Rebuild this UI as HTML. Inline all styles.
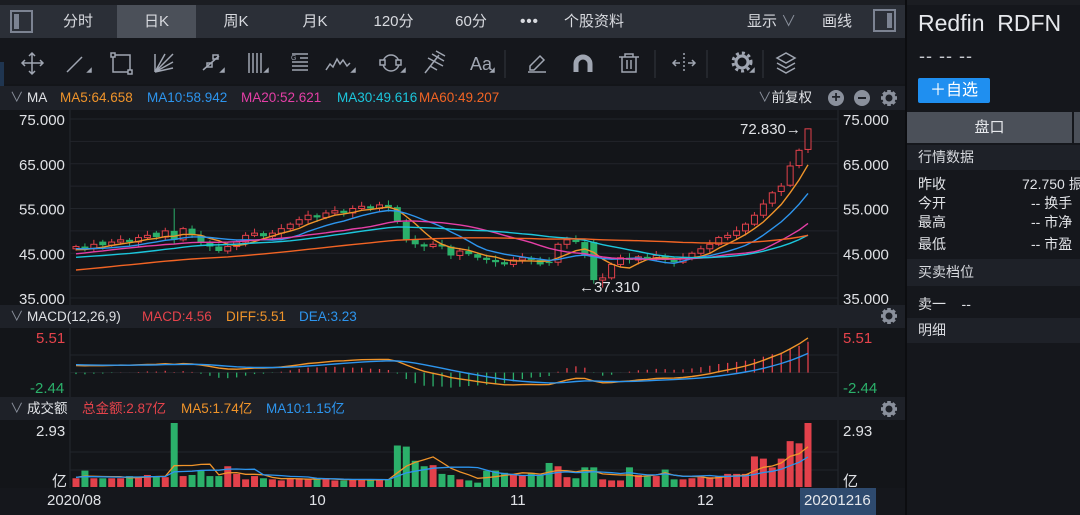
<!DOCTYPE html>
<html><head><meta charset="utf-8">
<style>
*{margin:0;padding:0;box-sizing:border-box}
body{width:1080px;height:515px;overflow:hidden;background:#131519;font-family:"Liberation Sans","Noto Sans CJK SC",sans-serif;color:#d8dadf;position:relative}
.a{position:absolute;white-space:nowrap}
.tab{position:absolute;top:5px;height:33px;background:#2b2f37;color:#d8dadf;font-size:15px;line-height:33px;text-align:center}
.hdr{position:absolute;left:0;width:905px;background:#1e2128;font-size:13.5px;line-height:23px}
.row{position:absolute;left:918px;font-size:14px;color:#e0e2e6;white-space:nowrap}
</style></head><body>
<div class="a" style="left:0;top:0;width:1080px;height:5px;background:#1b1d22"></div>
<div class="a" style="left:0;top:5px;width:905px;height:33px;background:#2b2f37"></div>
<div class="tab" style="left:0;width:38px;background:#2b2f37"><div class="a" style="left:10px;top:5px;width:23px;height:23px;border:2px solid #7c8392"><div class="a" style="left:2px;top:2px;width:5px;height:15px;background:#7c8392"></div></div></div>
<div class="tab" style="left:40px;width:76px">分时</div>
<div class="tab" style="left:117px;width:79px;background:#4b5059">日K</div>
<div class="tab" style="left:197px;width:78px">周K</div>
<div class="tab" style="left:276px;width:78px">月K</div>
<div class="tab" style="left:355px;width:77px">120分</div>
<div class="tab" style="left:433px;width:76px">60分</div>
<div class="tab" style="left:510px;width:39px;font-weight:bold;letter-spacing:1px">•••</div>
<div class="tab" style="left:550px;width:88px">个股资料</div>
<div class="tab" style="left:639px;width:266px;text-align:left"><span style="position:absolute;left:108px">显示 <span style="color:#8a909c">∨</span></span><span style="position:absolute;left:183px">画线</span><div class="a" style="left:234px;top:4px;width:23px;height:23px;border:2px solid #7c8392"><div class="a" style="right:2px;top:2px;width:5px;height:15px;background:#7c8392"></div></div></div>
<div class="a" style="left:0;top:38px;width:905px;height:46px;background:#15171c"></div>
<div class="a" style="left:0;top:62px;width:4px;height:320px;background:#1f3550"></div>
<svg class="a" style="left:0;top:38px" width="905" height="46" stroke="#a0a6b2" fill="none" stroke-width="1.5">
<path d="M22 25h21M32 15v21M29 18l3-3 3 3M29 33l3 3 3-3M25 22l-3 3 3 3M40 22l3 3-3 3"/>
<path d="M67 34l15-15"/><path d="M88 34l3-3v3z" fill="#a0a6b2"/>
<rect x="113" y="17" width="17" height="17"/><rect x="111" y="15" width="4" height="4" fill="#15171c"/><rect x="128" y="32" width="4" height="4" fill="#15171c"/>
<path d="M155 34V16M155 34l18-18M155 34l18-10M155 34l18-4M155 34l10-18M155 34l15-15"/>
<path d="M203 32l16-14"/><rect x="207" y="25" width="5" height="4"/><rect x="213" y="17" width="5" height="4"/><path d="M221 34l3-3v3z" fill="#a0a6b2"/>
<path d="M249 15v20M253 15v20M257 15v20M261 15v20"/><path d="M265 34l3-3v3z" fill="#a0a6b2"/>
<path d="M292 16h16M300 20h8M292 24h16M292 28h16M292 32h16"/><text x="291" y="22" font-size="7" fill="#a0a6b2" stroke="none">G</text>
<path d="M326 32l4-6 3 3 4-8 3 5 3-4 4 6 3-3"/><path d="M352 34l3-3v3z" fill="#a0a6b2"/>
<circle cx="391" cy="25" r="8"/><rect x="380" y="22" width="5" height="5" fill="#15171c"/><rect x="396" y="22" width="5" height="5" fill="#15171c"/><path d="M402 34l3-3v3z" fill="#a0a6b2"/>
<path d="M425 35l14-18M428 20l15 8M432 16l12 7M436 13l9 5M430 28l7 4"/>
<text x="470" y="32" font-size="18" fill="#a0a6b2" stroke="none" font-family="Liberation Sans">Aa</text><path d="M491 34l3-3v3z" fill="#a0a6b2"/>
<path d="M505 12v28" stroke="#2a2d33"/>
<path d="M530 28l10-10 4 4-10 10h-4zM528 34h18"/>
<path d="M576 34v-8a7 7 0 0 1 14 0v8" stroke-width="5"/>
<path d="M619 19h20M625 19v-3h8v3M622 19v15h14V19M627 22v9M631 22v9"/>
<path d="M655 12v28M707 12v28M763 12v28" stroke="#2a2d33"/>
<path d="M684 15v20" stroke-dasharray="2 2"/><path d="M680 25h-6M688 25h6M676 22l-3 3 3 3M692 22l3 3-3 3"/>
<circle cx="742" cy="24" r="6" stroke-width="3"/><circle cx="742" cy="24" r="9" stroke-dasharray="3 3" stroke-width="3"/><path d="M751 34l3-3v3z" fill="#a0a6b2"/>
<path d="M777 20l9-5 9 5-9 5zM777 25l9 5 9-5M777 30l9 5 9-5"/>
</svg>
<div class="hdr" style="top:86px;height:24px"><span class="a" style="left:10px;color:#8a909c">∨</span><span class="a" style="left:27px;color:#e0e2e6">MA</span>
<span class="a" style="left:60px;color:#f0942a">MA5:64.658</span><span class="a" style="left:147px;color:#2d95ee">MA10:58.942</span><span class="a" style="left:241px;color:#e43fa6">MA20:52.621</span><span class="a" style="left:337px;color:#1cc6dc">MA30:49.616</span><span class="a" style="left:419px;color:#f26424">MA60:49.207</span>
<span class="a" style="left:758px;color:#e0e2e6"><span style="color:#8a909c">∨</span>前复权</span>
<span class="a" style="left:828px;top:4px;width:16px;height:16px;border-radius:50%;background:#8a909c;color:#1e2128;font-weight:bold;line-height:16px;text-align:center;font-size:16px">+</span>
<span class="a" style="left:854px;top:4px;width:16px;height:16px;border-radius:50%;background:#8a909c"><span class="a" style="left:4px;top:7px;width:8px;height:2px;background:#1e2128"></span></span>
</div>
<div class="hdr" style="top:305px;height:23px"><span class="a" style="left:10px;color:#8a909c">∨</span><span class="a" style="left:27px;color:#e0e2e6">MACD(12,26,9)</span><span class="a" style="left:142px;color:#e5434b">MACD:4.56</span><span class="a" style="left:226px;color:#f0942a">DIFF:5.51</span><span class="a" style="left:299px;color:#2d95ee">DEA:3.23</span></div>
<div class="hdr" style="top:397px;height:23px"><span class="a" style="left:10px;color:#8a909c">∨</span><span class="a" style="left:27px;color:#e0e2e6">成交额</span><span class="a" style="left:82px;color:#e5434b">总金额:2.87亿</span><span class="a" style="left:181px;color:#f0942a">MA5:1.74亿</span><span class="a" style="left:266px;color:#2d95ee">MA10:1.15亿</span></div>
<svg id="ch" class="a" style="left:0;top:0" width="905" height="515"></svg>
<div class="a" style="left:905px;top:0;width:2px;height:515px;background:#0c0d10"></div>
<div class="a" style="left:907px;top:5px;width:173px;height:105px;background:#15171c"></div>
<div class="a" style="left:918px;top:10px;font-size:23px;color:#e6e8ec">Redfin&nbsp; RDFN</div>
<div class="a" style="left:919px;top:46px;font-size:18px;color:#c8cad0;letter-spacing:1px">-- -- --</div>
<div class="a" style="left:918px;top:78px;width:72px;height:25px;background:#1f8ff0;border-radius:2px;color:#fff;font-size:16px;line-height:25px;text-align:center">＋自选</div>
<div class="a" style="left:907px;top:110px;width:173px;height:405px;background:#15171c"></div>
<div class="a" style="left:907px;top:112px;width:165px;height:31px;background:#4b5059;color:#e6e8ec;font-size:15px;line-height:31px;text-align:center">盘口</div>
<div class="a" style="left:1074px;top:112px;width:6px;height:31px;background:#4b5059"></div>
<div class="a" style="left:907px;top:145px;width:173px;height:25px;background:#1e2128;font-size:14px;line-height:25px;padding-left:11px">行情数据</div>
<div class="row" style="top:174px">昨收</div><div class="row" style="top:193px">今开</div><div class="row" style="top:212px">最高</div><div class="row" style="top:234px">最低</div>
<div class="row" style="left:1022px;top:174px">72.750 振幅</div><div class="row" style="left:1031px;top:193px">-- 换手</div><div class="row" style="left:1031px;top:212px">-- 市净</div><div class="row" style="left:1031px;top:234px">-- 市盈</div>
<div class="a" style="left:907px;top:259px;width:173px;height:27px;background:#1e2128;font-size:14px;line-height:27px;padding-left:11px">买卖档位</div>
<div class="row" style="top:294px">卖一 &nbsp; &nbsp;--</div>
<div class="a" style="left:907px;top:318px;width:173px;height:25px;background:#1e2128;font-size:14px;line-height:25px;padding-left:11px">明细</div>
<script>
(function(){
var S='';
function L(x1,y1,x2,y2,c,w){S+='<line x1="'+x1+'" y1="'+y1+'" x2="'+x2+'" y2="'+y2+'" stroke="'+c+'" stroke-width="'+(w||1)+'"/>';}
function R(x,y,w,h,f,s){S+='<rect x="'+x+'" y="'+y+'" width="'+w+'" height="'+Math.max(h,1)+'" fill="'+f+'"'+(s?' stroke="'+s+'"':'')+'/>';}
function T(x,y,t,c,a,sz){S+='<text x="'+x+'" y="'+y+'" fill="'+c+'" font-size="'+(sz||15)+'" text-anchor="'+(a||'start')+'" font-family="Liberation Sans,Noto Sans CJK SC,sans-serif">'+t+'</text>';}
function P(pts,c,w){S+='<polyline fill="none" stroke="'+c+'" stroke-width="'+(w||1.5)+'" points="'+pts.join(' ')+'"/>';}
R(0,110,905,195,'#131519');R(0,328,905,69,'#131519');R(0,420,905,68,'#131519');
L(70,110,70,305,'#262930');L(70,328,70,397,'#262930');L(70,420,70,488,'#262930');
L(838,110,838,305,'#262930');L(838,328,838,397,'#262930');L(838,420,838,488,'#262930');
function py(p){return 119+(75-p)*4.475;}
for(var p=35;p<=75;p+=5){L(70,py(p),838,py(p),'#22252b');}
[75,65,55,45,35].forEach(function(p){T(19,py(p)+6,p.toFixed(3),'#e0e2e6');T(843,py(p)+6,p.toFixed(3),'#e0e2e6');});
var C=[46.5,46,47,46.8,47.5,48,47.5,48.5,49,48.6,50,48,50.5,49,47.5,46.5,45.5,46.5,47.5,49,49.5,48.8,49.5,50.5,51.5,52.5,53.5,53,54,54.5,54,55,55.5,55,55.8,55.3,52,48,47,46.5,47,46.5,44.5,45.5,44.8,44,43.5,43,42.5,43.5,44,43.5,42.5,42.8,47,48,47.5,44.5,39,39.5,42.5,44,43.5,44.2,43.8,44.5,43.5,43,44,45,46,47,48.5,49,50,51.5,53.5,56,58.5,60,64.5,68,72.8];
var N=C.length,pre=[];for(var i=0;i<70;i++)pre.push(34+i*0.18+Math.sin(i/3)*1.2);
var A=pre.concat(C);
function ma(n,i){var s=0;for(var k=0;k<n;k++)s+=A[i-k];return s/n;}
function X(i){return 76+i*(732/(N-1));}
var O=[];for(var i=0;i<N;i++){var pc=i?C[i-1]:46;var o=pc;if(Math.abs(C[i]-pc)<0.4)o=pc+(i%2?0.6:-0.6);O.push(o);}
O[58]=47.5;O[54]=43;O[82]=68.2;O[81]=64.6;O[80]=60.2;O[79]=58.8;O[78]=56.2;
var hi={11:55,59:37.31};
for(var i=0;i<N;i++){var x=X(i),o=O[i],c=C[i],up=c>=o;var tp=Math.max(o,c),bt=Math.min(o,c);var hh=(hi[i]&&hi[i]>tp)?hi[i]:tp+0.4+(i%3)*0.3;var ll=i==59?37.31:bt-0.4-(i%4)*0.2;
if(i==82)hh=72.9;
var col=up?'#e2414b':'#2bb06a';L(x,py(hh),x,py(ll),col,1);
if(up)R(x-3,py(tp),6,py(bt)-py(tp),'#131519',col);else R(x-3.5,py(tp),7,py(bt)-py(tp),col);}
var mc=[[5,'#f0942a'],[10,'#2d95ee'],[20,'#e43fa6'],[30,'#1cc6dc'],[60,'#f26424']];
mc.forEach(function(m){var pts=[];for(var i=0;i<N;i++){pts.push(X(i).toFixed(1)+','+py(ma(m[0],i+70)).toFixed(1));}P(pts,m[1],1.4);});
T(740,134,'72.830→','#e0e2e6');T(579,292,'←37.310','#e0e2e6');
function ema(arr,n){var k=2/(n+1),r=[arr[0]];for(var i=1;i<arr.length;i++)r.push(arr[i]*k+r[i-1]*(1-k));return r;}
var e12=ema(A,12),e26=ema(A,26),dif=[];for(var i=0;i<A.length;i++)dif.push(e12[i]-e26[i]);var dea=ema(dif,9);
var sc=5.51/dif[A.length-1];
function my(v){return 372.6-v*sc*(50/7.95);}
L(70,355,838,355,'#22252b');L(70,372.6,838,372.6,'#22252b');
T(36,343,'5.51','#e5434b');T(843,343,'5.51','#e5434b');T(30,393,'-2.44','#2bb06a');T(843,393,'-2.44','#2bb06a');
var dp=[],ep=[];for(var i=0;i<N;i++){var j=i+70,x=X(i);var hv=(dif[j]-dea[j])*2;L(x,my(0),x,my(hv),hv>=0?'#e2414b':'#2bb06a',1.3);dp.push(x.toFixed(1)+','+my(dif[j]).toFixed(1));ep.push(x.toFixed(1)+','+my(dea[j]).toFixed(1));}
P(dp,'#f0942a',1.4);P(ep,'#2d95ee',1.4);
var V=[0.4,0.75,0.4,0.4,0.4,0.4,0.5,0.45,0.55,0.5,0.45,2.93,0.5,0.55,0.75,0.5,0.5,0.95,0.6,0.35,0.5,0.4,0.35,0.3,0.4,0.4,0.35,0.35,0.4,0.3,0.3,0.35,0.35,0.3,0.35,0.35,1.9,1.85,1.2,0.95,1.0,0.6,0.55,0.35,0.3,0.2,0.75,0.75,0.65,0.55,0.55,0.65,0.55,1.1,0.95,0.45,0.4,0.9,0.9,0.35,0.3,0.3,0.9,0.55,0.5,0.5,0.8,0.35,0.35,0.4,0.45,0.45,0.5,0.6,0.6,0.6,1.4,1.3,0.9,1.3,1.3,2.87];
while(V.length<N)V.push(0.5);V=V.slice(0,N);V[N-1]=2.93;V[N-2]=2.0;V[N-3]=2.1;
function vy(v){return 487-v*(64/2.93);}
L(70,452,838,452,'#22252b');L(70,470,838,470,'#22252b');
T(36,436,'2.93','#e0e2e6');T(843,436,'2.93','#e0e2e6');T(52,486,'亿','#e0e2e6');T(843,486,'亿','#e0e2e6');
var v5=[],v10=[];
function vm(i,n){var s=0;for(var k=0;k<n;k++){var q=i-k;s+=q>=0?V[q]:0.45;}return s/n;}
for(var i=0;i<N;i++){var x=X(i),up=C[i]>=O[i];R(x-3.5,vy(V[i]),7,487-vy(V[i]),up?'#e2414b':'#2bb06a');
v5.push(x.toFixed(1)+','+vy(vm(i,5)).toFixed(1));v10.push(x.toFixed(1)+','+vy(vm(i,10)).toFixed(1));}
P(v5,'#f0942a',1.3);P(v10,'#2d95ee',1.3);
R(0,488,905,27,'#15171c');
T(47,505,'2020/08','#e0e2e6');T(309,505,'10','#e0e2e6');T(510,505,'11','#e0e2e6');T(697,505,'12','#e0e2e6');
R(800,488,76,27,'#2e4a6e');T(804,505,'20201216','#e6e8ec');
function G(cx,cy){for(var k=0;k<8;k++){S+='<rect x="'+(cx-1.8)+'" y="'+(cy-8)+'" width="3.6" height="4" fill="#8a909c" transform="rotate('+(k*45)+' '+cx+' '+cy+')"/>';}S+='<circle cx="'+cx+'" cy="'+cy+'" r="5" fill="none" stroke="#8a909c" stroke-width="3"/>';}
G(889,98);G(889,316);G(889,409);
document.getElementById('ch').innerHTML=S;
})();
</script>
</body></html>
